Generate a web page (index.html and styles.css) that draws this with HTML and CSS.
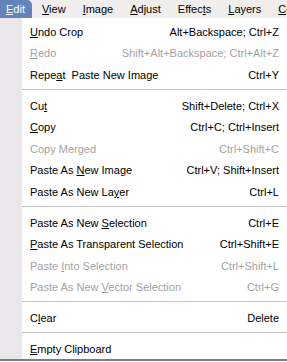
FILE: index.html
```html
<!DOCTYPE html>
<html lang="en">
<head>
    <meta charset="UTF-8">
    <meta name="viewport" content="width=device-width, initial-scale=1.0">
    <title>Edit Menu</title>
    <link rel="stylesheet" href="styles.css">
</head>
<body>
    <div class="menubar">
        <a class="menu-title active"><u>E</u>dit</a>
        <a class="menu-title"><u>V</u>iew</a>
        <a class="menu-title"><u>I</u>mage</a>
        <a class="menu-title"><u>A</u>djust</a>
        <a class="menu-title">Effec<u>t</u>s</a>
        <a class="menu-title"><u>L</u>ayers</a>
        <a class="menu-title"><u>C</u>olors</a>
    </div>

    <div class="menu">
        <div class="item"><span><u>U</u>ndo Crop</span><span>Alt+Backspace; Ctrl+Z</span></div>
        <div class="item disabled"><span><u>R</u>edo</span><span>Shift+Alt+Backspace; Ctrl+Alt+Z</span></div>
        <div class="item"><span>Repe<u>a</u>t &nbsp;Paste New Image</span><span>Ctrl+Y</span></div>
        <div class="separator"></div>
        <div class="item"><span>Cu<u>t</u></span><span>Shift+Delete; Ctrl+X</span></div>
        <div class="item"><span><u>C</u>opy</span><span>Ctrl+C; Ctrl+Insert</span></div>
        <div class="item disabled"><span>Copy Merged</span><span>Ctrl+Shift+C</span></div>
        <div class="item"><span>Paste As <u>N</u>ew Image</span><span>Ctrl+V; Shift+Insert</span></div>
        <div class="item"><span>Paste As New La<u>y</u>er</span><span>Ctrl+L</span></div>
        <div class="separator"></div>
        <div class="item"><span>Paste As New <u>S</u>election</span><span>Ctrl+E</span></div>
        <div class="item"><span><u>P</u>aste As Transparent Selection</span><span>Ctrl+Shift+E</span></div>
        <div class="item disabled"><span>Paste <u>I</u>nto Selection</span><span>Ctrl+Shift+L</span></div>
        <div class="item disabled"><span>Paste As New <u>V</u>ector Selection</span><span>Ctrl+G</span></div>
        <div class="separator"></div>
        <div class="item"><span>C<u>l</u>ear</span><span>Delete</span></div>
        <div class="separator"></div>
        <div class="item"><span><u>E</u>mpty Clipboard</span><span></span></div>
    </div>
</body>
</html>
```

FILE: styles.css
```css
body {
    margin: 0;
    font-family: "Liberation Sans", Arial, sans-serif;
    font-size: 11px;
    color: #000;
    width: 287px;
    height: 362px;
    overflow: hidden;
    background-color: #ffffff;
}

u {
    text-decoration: underline;
    text-underline-offset: 1px;
}

.menubar {
    display: flex;
    height: 18px;
    background-color: #efeeec;
    white-space: nowrap;
    overflow: hidden;
}

.menu-title {
    display: block;
    flex-shrink: 0;
    line-height: 18px;
    padding: 0 7px 0 10px;
    color: #000;
}

.menu-title.active {
    background-color: #6283ba;
    color: #ffffff;
    border-top-right-radius: 5px;
    padding: 0 7px 0 6px;
}

.menu {
    padding-top: 3px;
    border-bottom: 2px solid #7c7c7c;
    background: linear-gradient(to right, #e9e7ea 22px, #ffffff 22px);
}

.item {
    display: flex;
    justify-content: space-between;
    align-items: center;
    height: 21.6px;
    padding: 0 8px 0 30px;
    white-space: nowrap;
}

.item.disabled {
    color: #a3a3a3;
}

.separator {
    height: 9px;
    padding-top: 3px;
    box-sizing: border-box;
}

.separator::before {
    content: "";
    display: block;
    margin-left: 22px;
    height: 1px;
    background-color: #c6c4c6;
}
```
